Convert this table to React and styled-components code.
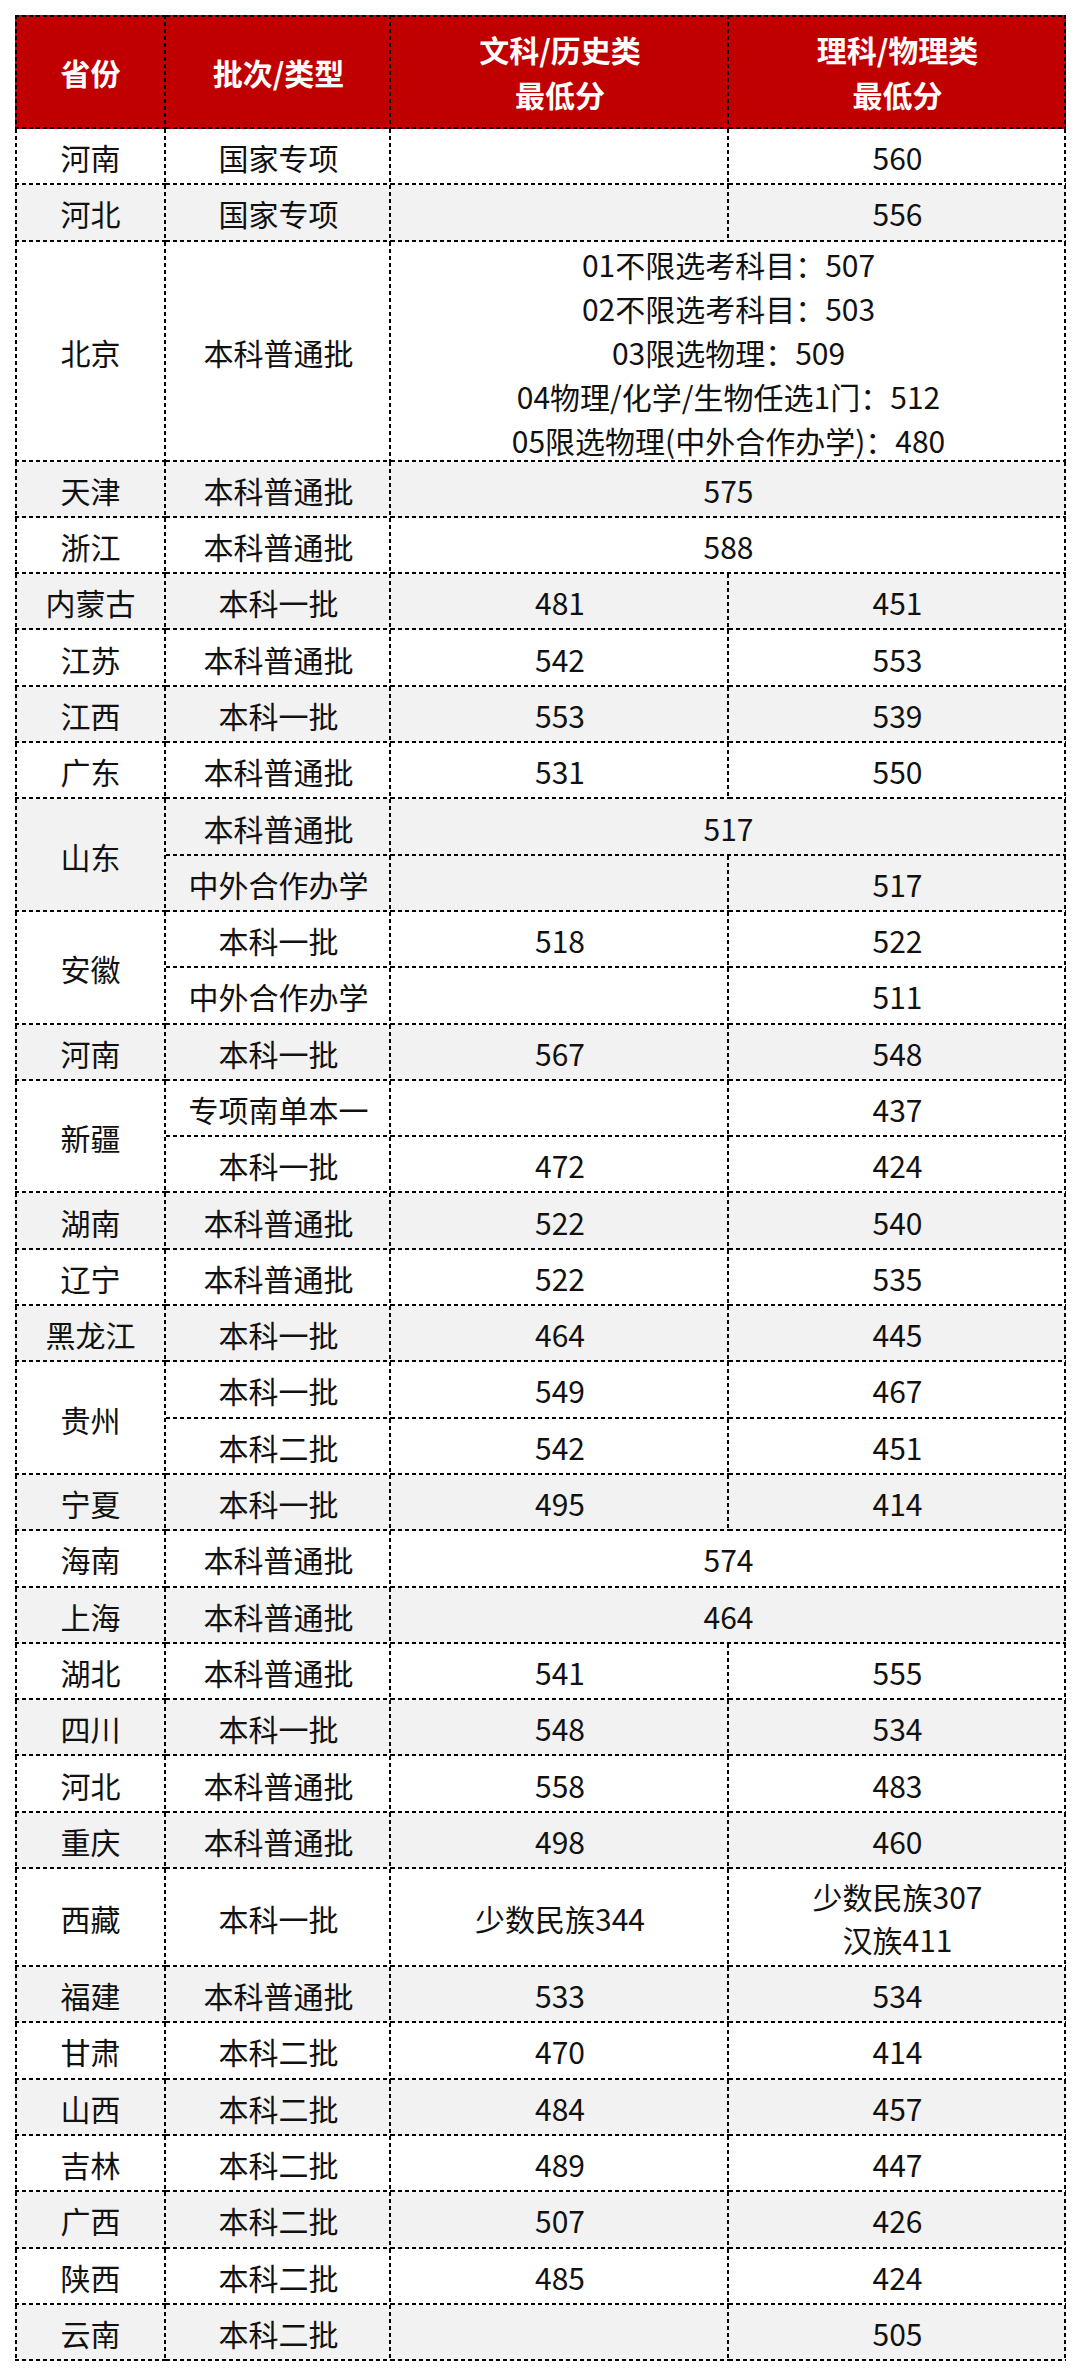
import React from "react";
import styled, { createGlobalStyle, css } from "styled-components";

const GlobalStyle = createGlobalStyle`
  html, body {
    margin: 0;
    padding: 0;
    background: #fff;
  }
  body {
    font-family: "Noto Sans CJK SC", "Noto Sans", sans-serif;
  }
`;

// dashed edges drawn as gradients: 4px dash, 3px gap, 2px thick
const h = "repeating-linear-gradient(90deg, #000 0 4px, transparent 4px 7px)";
const v = "repeating-linear-gradient(180deg, #000 0 4px, transparent 4px 7px)";

const edges = css`
  background:
    ${h} left bottom / 100% 2px no-repeat,
    ${v} right top / 2px 100% no-repeat,
    ${(p) => (p.$top ? css`${h} left top / 100% 2px no-repeat,` : "")}
    ${(p) => (p.$left ? css`${v} left top / 2px 100% no-repeat,` : "")}
    ${(p) => p.$bg};
`;

const Page = styled.div`
  padding: 15px 14px 15px 15px;
`;

const Table = styled.table`
  width: 1051px;
  border-collapse: separate;
  border-spacing: 0;
  table-layout: fixed;
  font-size: 30px;
  color: #111;
`;

const Col = styled.col`
  width: ${(p) => p.$w}px;
`;

const HeadCell = styled.th`
  ${edges}
  color: #fff;
  font-weight: 700;
  height: 114px;
  line-height: 45px;
  padding: 0;
`;

const Row = styled.tr`
  height: ${(p) => p.$h || 56.3}px;
`;

const Cell = styled.td`
  ${edges}
  text-align: center;
  vertical-align: middle;
  padding: 0;
  line-height: 40px;
  white-space: nowrap;
`;

const Line = styled.div`
  line-height: ${(p) => p.$lh}px;
`;

const data = [
  { p: "河南", rows: [{ b: "国家专项", w: "", l: "560" }] },
  { p: "河北", rows: [{ b: "国家专项", w: "", l: "556" }] },
  {
    p: "北京",
    rows: [
      {
        b: "本科普通批",
        m: [
          "01不限选考科目：507",
          "02不限选考科目：503",
          "03限选物理：509",
          "04物理/化学/生物任选1门：512",
          "05限选物理(中外合作办学)：480",
        ],
        h: 220,
      },
    ],
  },
  { p: "天津", rows: [{ b: "本科普通批", m: "575" }] },
  { p: "浙江", rows: [{ b: "本科普通批", m: "588" }] },
  { p: "内蒙古", rows: [{ b: "本科一批", w: "481", l: "451" }] },
  { p: "江苏", rows: [{ b: "本科普通批", w: "542", l: "553" }] },
  { p: "江西", rows: [{ b: "本科一批", w: "553", l: "539" }] },
  { p: "广东", rows: [{ b: "本科普通批", w: "531", l: "550" }] },
  {
    p: "山东",
    rows: [
      { b: "本科普通批", m: "517" },
      { b: "中外合作办学", w: "", l: "517" },
    ],
  },
  {
    p: "安徽",
    rows: [
      { b: "本科一批", w: "518", l: "522" },
      { b: "中外合作办学", w: "", l: "511" },
    ],
  },
  { p: "河南", rows: [{ b: "本科一批", w: "567", l: "548" }] },
  {
    p: "新疆",
    rows: [
      { b: "专项南单本一", w: "", l: "437" },
      { b: "本科一批", w: "472", l: "424" },
    ],
  },
  { p: "湖南", rows: [{ b: "本科普通批", w: "522", l: "540" }] },
  { p: "辽宁", rows: [{ b: "本科普通批", w: "522", l: "535" }] },
  { p: "黑龙江", rows: [{ b: "本科一批", w: "464", l: "445" }] },
  {
    p: "贵州",
    rows: [
      { b: "本科一批", w: "549", l: "467" },
      { b: "本科二批", w: "542", l: "451" },
    ],
  },
  { p: "宁夏", rows: [{ b: "本科一批", w: "495", l: "414" }] },
  { p: "海南", rows: [{ b: "本科普通批", m: "574" }] },
  { p: "上海", rows: [{ b: "本科普通批", m: "464" }] },
  { p: "湖北", rows: [{ b: "本科普通批", w: "541", l: "555" }] },
  { p: "四川", rows: [{ b: "本科一批", w: "548", l: "534" }] },
  { p: "河北", rows: [{ b: "本科普通批", w: "558", l: "483" }] },
  { p: "重庆", rows: [{ b: "本科普通批", w: "498", l: "460" }] },
  {
    p: "西藏",
    rows: [
      { b: "本科一批", w: "少数民族344", l: ["少数民族307", "汉族411"], h: 98 },
    ],
  },
  { p: "福建", rows: [{ b: "本科普通批", w: "533", l: "534" }] },
  { p: "甘肃", rows: [{ b: "本科二批", w: "470", l: "414" }] },
  { p: "山西", rows: [{ b: "本科二批", w: "484", l: "457" }] },
  { p: "吉林", rows: [{ b: "本科二批", w: "489", l: "447" }] },
  { p: "广西", rows: [{ b: "本科二批", w: "507", l: "426" }] },
  { p: "陕西", rows: [{ b: "本科二批", w: "485", l: "424" }] },
  { p: "云南", rows: [{ b: "本科二批", w: "", l: "505" }] },
];

const RED = "#c00000";

function Value({ v, lh }) {
  if (Array.isArray(v)) {
    return v.map((t, i) => (
      <Line key={i} $lh={lh}>
        {t}
      </Line>
    ));
  }
  return v;
}

export default function App() {
  return (
    <Page>
      <GlobalStyle />
      <Table>
        <colgroup>
          <Col $w={151} />
          <Col $w={225} />
          <Col $w={338} />
          <Col $w={337} />
        </colgroup>
        <thead>
          <tr>
            <HeadCell $bg={RED} $top $left>
              省份
            </HeadCell>
            <HeadCell $bg={RED} $top>
              批次/类型
            </HeadCell>
            <HeadCell $bg={RED} $top>
              文科/历史类
              <br />
              最低分
            </HeadCell>
            <HeadCell $bg={RED} $top>
              理科/物理类
              <br />
              最低分
            </HeadCell>
          </tr>
        </thead>
        <tbody>
          {data.map((g, gi) => {
            const bg = gi % 2 === 1 ? "#f2f2f2" : "#fff";
            return g.rows.map((r, ri) => (
              <Row key={`${gi}-${ri}`} $h={r.h}>
                {ri === 0 && (
                  <Cell rowSpan={g.rows.length} $bg={bg} $left>
                    {g.p}
                  </Cell>
                )}
                <Cell $bg={bg}>{r.b}</Cell>
                {r.m !== undefined ? (
                  <Cell colSpan={2} $bg={bg}>
                    <Value v={r.m} lh={44} />
                  </Cell>
                ) : (
                  <>
                    <Cell $bg={bg}>
                      <Value v={r.w} lh={43} />
                    </Cell>
                    <Cell $bg={bg}>
                      <Value v={r.l} lh={43} />
                    </Cell>
                  </>
                )}
              </Row>
            ));
          })}
        </tbody>
      </Table>
    </Page>
  );
}
